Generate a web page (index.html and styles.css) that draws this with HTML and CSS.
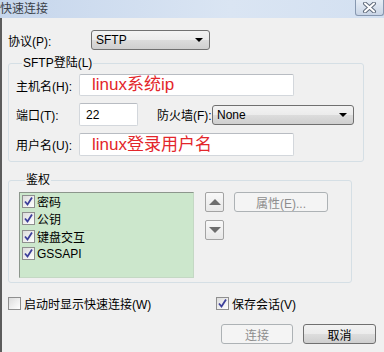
FILE: index.html
```html
<!DOCTYPE html>
<html>
<head>
<meta charset="utf-8">
<link rel="stylesheet" href="styles.css">
</head>
<body>
<div class="titlebar">
  <span class="title">快速连接</span>
  <span class="close"><svg width="17" height="11" viewBox="0 0 17 11"><path d="M4 1.5 L13 9.5 M13 1.5 L4 9.5" stroke="#5f6b7c" stroke-width="4" stroke-linecap="round"/><path d="M4 1.5 L13 9.5 M13 1.5 L4 9.5" stroke="#ffffff" stroke-width="2" stroke-linecap="round"/></svg></span>
</div>
<div class="frame">
  <div class="edge"></div>
  <div class="main">
    <div class="proto-row">
      <span class="proto-label">协议(P):</span>
      <div class="select proto-select"><span>SFTP</span><i class="arrow"></i></div>
    </div>
    <fieldset class="group sftp">
      <legend>SFTP登陆(L)</legend>
      <div class="frow r1">
        <span class="flabel">主机名(H):</span>
        <div class="input wide"><span class="red">linux系统ip</span></div>
      </div>
      <div class="frow r2">
        <span class="flabel">端口(T):</span>
        <div class="input port"><span class="val">22</span></div>
        <span class="fwlabel">防火墙(F):</span>
        <div class="select fw-select"><span>None</span><i class="arrow"></i></div>
      </div>
      <div class="frow r3">
        <span class="flabel">用户名(U):</span>
        <div class="input wide"><span class="red">linux登录用户名</span></div>
      </div>
    </fieldset>
    <fieldset class="group auth">
      <legend>鉴权</legend>
      <div class="auth-body">
        <div class="list">
          <div class="item"><span class="cb on"><svg width="11" height="11" viewBox="0 0 11 11"><path d="M2 5.5 L4.5 8.5 L9 1.5" fill="none" stroke="#3c3f9a" stroke-width="1.8"/></svg></span>密码</div>
          <div class="item"><span class="cb on"><svg width="11" height="11" viewBox="0 0 11 11"><path d="M2 5.5 L4.5 8.5 L9 1.5" fill="none" stroke="#3c3f9a" stroke-width="1.8"/></svg></span>公钥</div>
          <div class="item"><span class="cb on"><svg width="11" height="11" viewBox="0 0 11 11"><path d="M2 5.5 L4.5 8.5 L9 1.5" fill="none" stroke="#3c3f9a" stroke-width="1.8"/></svg></span>键盘交互</div>
          <div class="item"><span class="cb on"><svg width="11" height="11" viewBox="0 0 11 11"><path d="M2 5.5 L4.5 8.5 L9 1.5" fill="none" stroke="#3c3f9a" stroke-width="1.8"/></svg></span>GSSAPI</div>
        </div>
        <div class="arrows">
          <div class="abtn"><i class="tri up"></i></div>
          <div class="abtn"><i class="tri down"></i></div>
        </div>
        <div class="btn disabled prop">属性(E)...</div>
      </div>
    </fieldset>
    <div class="opts">
      <div class="opt first"><span class="cb"></span>启动时显示快速连接(W)</div>
      <div class="opt"><span class="cb on"><svg width="11" height="11" viewBox="0 0 11 11"><path d="M2 5.5 L4.5 8.5 L9 1.5" fill="none" stroke="#3c3f9a" stroke-width="1.8"/></svg></span>保存会话(V)</div>
    </div>
    <div class="buttons">
      <div class="btn disabled connect">连接</div>
      <div class="btn cancel">取消</div>
    </div>
  </div>
</div>
</body>
</html>
```
FILE: styles.css
```css
* { box-sizing: border-box; }
html, body { margin: 0; padding: 0; }
body {
  width: 384px;
  height: 352px;
  overflow: hidden;
  background: #f0f0f0;
  font-family: "Liberation Sans", "Noto Sans CJK SC", sans-serif;
  font-size: 12px;
  color: #000;
}
.titlebar {
  height: 18px;
  display: flex;
  justify-content: space-between;
  align-items: flex-start;
  background: linear-gradient(to right, #c6d6ec, #dae5f3 60%, #d3e0f1);
}
.title {
  font-size: 12px;
  line-height: 14px;
  padding-top: 2px;
  color: #3a3f48;
}
.close {
  width: 29px;
  height: 16px;
  border: 1px solid #8798b0;
  border-top: none;
  border-radius: 0 0 3px 3px;
  background: linear-gradient(#e6edf6, #c9d5e6);
  display: flex;
  align-items: center;
  justify-content: center;
}
.frame {
  display: flex;
  height: 334px;
}
.edge {
  width: 2px;
  background: #5c5c5c;
}
.main {
  flex: 1;
  padding: 0 8px 0 6px;
}
.proto-row {
  margin-top: 12px;
  height: 20px;
  display: flex;
  align-items: center;
}
.proto-label { width: 83px; }
.select {
  height: 20px;
  border: 1px solid #707070;
  border-radius: 3px;
  background: linear-gradient(#f3f3f3, #ebebeb 50%, #dcdcdc 51%, #cfcfcf);
  display: flex;
  align-items: center;
  justify-content: space-between;
  padding: 0 6px 0 4px;
}
.proto-select { width: 119px; }
.fw-select { width: 142px; }
.arrow {
  width: 0;
  height: 0;
  border-left: 4px solid transparent;
  border-right: 4px solid transparent;
  border-top: 4px solid #000;
}
.group {
  margin: 0;
  border: 1px solid #d5dfe5;
  border-radius: 3px;
  padding: 0;
}
.group legend {
  font-size: 12px;
  line-height: 12px;
  padding: 0 1px;
  margin-left: 6px;
}
.sftp {
  margin-top: 7px;
  width: 356px;
  padding: 5px 0 5px 7px;
}
.frow {
  display: flex;
  align-items: center;
}
.r1 { height: 22px; }
.r2 { height: 23px; margin-top: 7px; }
.r3 { height: 23px; margin-top: 7px; }
.flabel { width: 63px; }
.input {
  height: 100%;
  background: #fff;
  border: 1px solid #d3d7dc;
  border-top-color: #b8bcc2;
  border-radius: 2px;
  display: flex;
  align-items: center;
  padding-left: 12px;
}
.wide { width: 215px; }
.port { width: 59px; padding-left: 6px; }
.val { font-size: 12px; }
.red {
  color: #e3262b;
  font-size: 17px;
  line-height: 20px;
}
.fwlabel { margin-left: 19px; width: 55px; }
.auth {
  margin-top: 12px;
  width: 344px;
  padding: 6px 0 4px 10px;
}
.auth-body {
  display: flex;
  align-items: flex-start;
}
.list {
  width: 175px;
  height: 86px;
  background: #cce7cc;
  border: 1px solid #8c968c;
  border-right-color: #c4d8c4;
  border-bottom-color: #c4d8c4;
  padding: 0 0 0 2px;
}
.item {
  height: 17.3px;
  display: flex;
  align-items: center;
}
.cb {
  width: 13px;
  height: 13px;
  border: 1px solid #8f8f8f;
  background: linear-gradient(135deg, #dcdcdc, #ffffff);
  margin-right: 2px;
  display: flex;
  align-items: center;
  justify-content: center;
}
.arrows {
  margin-left: 11px;
  display: flex;
  flex-direction: column;
  gap: 8px;
}
.abtn {
  width: 19px;
  height: 20px;
  border: 1px solid #a3a3a3;
  border-radius: 2px;
  background: linear-gradient(#f8f8f8, #e8e8e8);
  display: flex;
  align-items: center;
  justify-content: center;
}
.tri {
  width: 0;
  height: 0;
  border-left: 6px solid transparent;
  border-right: 6px solid transparent;
}
.tri.up { border-bottom: 6px solid #6d6d6d; }
.tri.down { border-top: 6px solid #6d6d6d; }
.btn {
  height: 20px;
  border-radius: 3px;
  display: flex;
  align-items: center;
  justify-content: center;
}
.btn.disabled {
  border: 1px solid #adb2b5;
  background: #f4f4f4;
  color: #8d8d8d;
}
.prop { width: 94px; margin-left: 10px; }
.opts {
  margin-top: 14px;
  display: flex;
  height: 13px;
  align-items: center;
}
.opt { display: flex; align-items: center; }
.opt .cb { margin-right: 3px; }
.opt.first { width: 208px; }
.buttons {
  margin-top: 14px;
  display: flex;
  justify-content: flex-end;
  gap: 10px;
}
.connect { width: 72px; border-color: #c3c3c3; color: #a2a2a2; }
.cancel {
  width: 73px;
  border: 1px solid #707070;
  background: linear-gradient(#f2f2f2, #ebebeb 50%, #dddddd 51%, #cfcfcf);
}
```
